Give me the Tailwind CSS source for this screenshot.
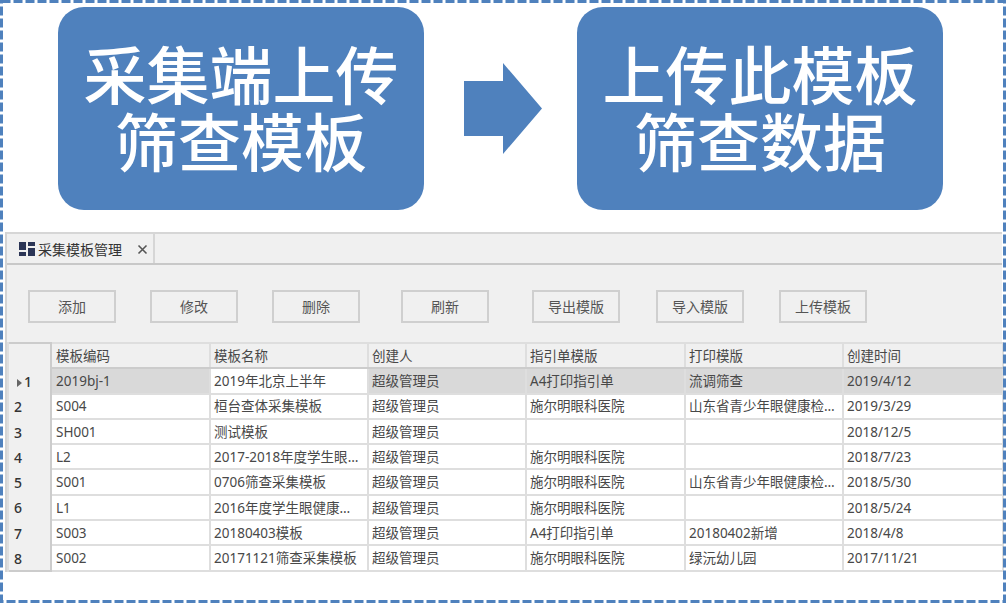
<!DOCTYPE html>
<html lang="zh"><head><meta charset="utf-8">
<script src="https://cdn.jsdelivr.net/npm/@tailwindcss/browser@4"></script></head>
<body class="bg-white">
<div class="relative w-[1006px] h-[603px] overflow-hidden bg-white font-['Noto_Sans','Noto_Sans_CJK_SC',sans-serif]">
<svg class="absolute inset-0 z-10" width="1006" height="603"><rect x="1.5" y="1.5" width="1003" height="600" fill="none" stroke="#4f81bd" stroke-width="3" stroke-dasharray="9 3"/></svg>
<div class="flex items-start pt-[7px] pl-[58px] h-[232px]">
  <div class="w-[366px] h-[203px] pb-[8px] rounded-[26px] bg-[#4f81bd] flex flex-col items-center justify-center text-white text-[63px] leading-[67px] font-medium font-['Noto_Sans_CJK_SC',sans-serif]"><div>采集端上传</div><div>筛查模板</div></div>
  <svg class="mt-[56px] ml-[40px] mr-[35px]" width="78" height="91" viewBox="0 0 78 91"><path d="M0 18H39V0L78 45.5L39 91V73H0Z" fill="#4f81bd"/></svg>
  <div class="w-[366px] h-[203px] pb-[8px] rounded-[26px] bg-[#4f81bd] flex flex-col items-center justify-center text-white text-[63px] leading-[67px] font-medium font-['Noto_Sans_CJK_SC',sans-serif]"><div>上传此模板</div><div>筛查数据</div></div>
</div>
<div class="ml-[5px] w-[997px] h-[340px] bg-white text-[13.5px] text-[#484848] border-l-2 border-[#d4d4d4]">
  <div class="h-[31px] flex items-stretch bg-[#f0f0f0] border-t-2 border-[#d6d6d6]">
    <div class="w-[148px] flex items-center pl-[12px] pt-[2px] border-r-2 border-[#d6d6d6] text-[#333]">
      <svg width="16" height="15" viewBox="0 0 16 15" class="mr-[3px]"><path d="M0 0H7V8H0ZM9 0H16V4H9ZM9 6H16V14H9ZM0 10H7V14H0Z" fill="#2b3556"/></svg>
      <span class="text-[14px]">采集模板管理</span>
      <svg width="11" height="11" viewBox="0 0 11 11" class="ml-[15px]"><path d="M1.5 1.5L9.5 9.5M9.5 1.5L1.5 9.5" stroke="#555" stroke-width="1.6"/></svg>
    </div>
    <div class="flex-1"></div>
  </div>
  <div class="h-[79px] bg-[#f0f0f0] border-t-2 border-[#c8c8c8] flex items-center">
    <div class="flex pl-[21px] pt-[5px] text-[14px] text-[#555]">
      <div class="w-[88px] h-[33px] border-2 border-[#cfcfcf] flex items-center justify-center">添加</div>
      <div class="w-[88px] h-[33px] ml-[34px] border-2 border-[#cfcfcf] flex items-center justify-center">修改</div>
      <div class="w-[88px] h-[33px] ml-[34px] border-2 border-[#cfcfcf] flex items-center justify-center">删除</div>
      <div class="w-[88px] h-[33px] ml-[41px] border-2 border-[#cfcfcf] flex items-center justify-center">刷新</div>
      <div class="w-[88px] h-[33px] ml-[43px] border-2 border-[#cfcfcf] flex items-center justify-center">导出模版</div>
      <div class="w-[88px] h-[33px] ml-[36px] border-2 border-[#cfcfcf] flex items-center justify-center">导入模版</div>
      <div class="w-[88px] h-[33px] ml-[35px] border-2 border-[#cfcfcf] flex items-center justify-center">上传模板</div>
    </div>
  </div>
  <table class="table-fixed border-collapse w-[995px] border-t-2 border-b-2 border-r-2 border-[#cccccc]">
    <colgroup><col class="w-[43px]"><col class="w-[159px]"><col class="w-[158px]"><col class="w-[158px]"><col class="w-[159px]"><col class="w-[158px]"><col class="w-[160px]"></colgroup>
    <tbody class="[&_td]:border-2 [&_td]:border-[#dedede] [&_td]:h-[25.3px] [&_td]:p-0 [&_td]:pt-[2px] [&_td]:pl-[3px] [&_td:nth-child(2)]:pl-[4px] [&_td]:truncate [&_td]:leading-none">
      <tr class="bg-[#f0f0f0] [&_td]:border-b-[#cccccc]"><td class="border-r-[#cccccc]! border-y-0!"></td><td>模板编码</td><td>模板名称</td><td>创建人</td><td>指引单模版</td><td>打印模版</td><td>创建时间</td></tr>
      <tr class="bg-[#d9d9d9]"><td class="bg-[#f0f0f0] border-r-[#cccccc]! border-y-0! text-[14px] text-[#333] font-medium"><span class="inline-block align-middle w-0 h-0 ml-[5px] mr-[2px] border-y-[4px] border-y-transparent border-l-[5px] border-l-[#666]"></span>1</td><td>2019bj-1</td><td class="bg-white">2019年北京上半年</td><td>超级管理员</td><td>A4打印指引单</td><td>流调筛查</td><td>2019/4/12</td></tr>
      <tr><td class="bg-[#f0f0f0] border-r-[#cccccc]! border-y-0! text-[14px] text-[#333] font-medium pl-[5px]!">2</td><td>S004</td><td>桓台查体采集模板</td><td>超级管理员</td><td>施尔明眼科医院</td><td>山东省青少年眼健康检查表</td><td>2019/3/29</td></tr>
      <tr><td class="bg-[#f0f0f0] border-r-[#cccccc]! border-y-0! text-[14px] text-[#333] font-medium pl-[5px]!">3</td><td>SH001</td><td>测试模板</td><td>超级管理员</td><td></td><td></td><td>2018/12/5</td></tr>
      <tr><td class="bg-[#f0f0f0] border-r-[#cccccc]! border-y-0! text-[14px] text-[#333] font-medium pl-[5px]!">4</td><td>L2</td><td>2017-2018年度学生眼健康检查</td><td>超级管理员</td><td>施尔明眼科医院</td><td></td><td>2018/7/23</td></tr>
      <tr><td class="bg-[#f0f0f0] border-r-[#cccccc]! border-y-0! text-[14px] text-[#333] font-medium pl-[5px]!">5</td><td>S001</td><td>0706筛查采集模板</td><td>超级管理员</td><td>施尔明眼科医院</td><td>山东省青少年眼健康检查表</td><td>2018/5/30</td></tr>
      <tr><td class="bg-[#f0f0f0] border-r-[#cccccc]! border-y-0! text-[14px] text-[#333] font-medium pl-[5px]!">6</td><td>L1</td><td class="pr-[10px]!">2016年度学生眼健康检查表</td><td>超级管理员</td><td>施尔明眼科医院</td><td></td><td>2018/5/24</td></tr>
      <tr><td class="bg-[#f0f0f0] border-r-[#cccccc]! border-y-0! text-[14px] text-[#333] font-medium pl-[5px]!">7</td><td>S003</td><td>20180403模板</td><td>超级管理员</td><td>A4打印指引单</td><td>20180402新增</td><td>2018/4/8</td></tr>
      <tr><td class="bg-[#f0f0f0] border-r-[#cccccc]! border-y-0! text-[14px] text-[#333] font-medium pl-[5px]!">8</td><td>S002</td><td>20171121筛查采集模板</td><td>超级管理员</td><td>施尔明眼科医院</td><td>绿沅幼儿园</td><td>2017/11/21</td></tr>
    </tbody>
  </table>
</div>
</div>
</body></html>
